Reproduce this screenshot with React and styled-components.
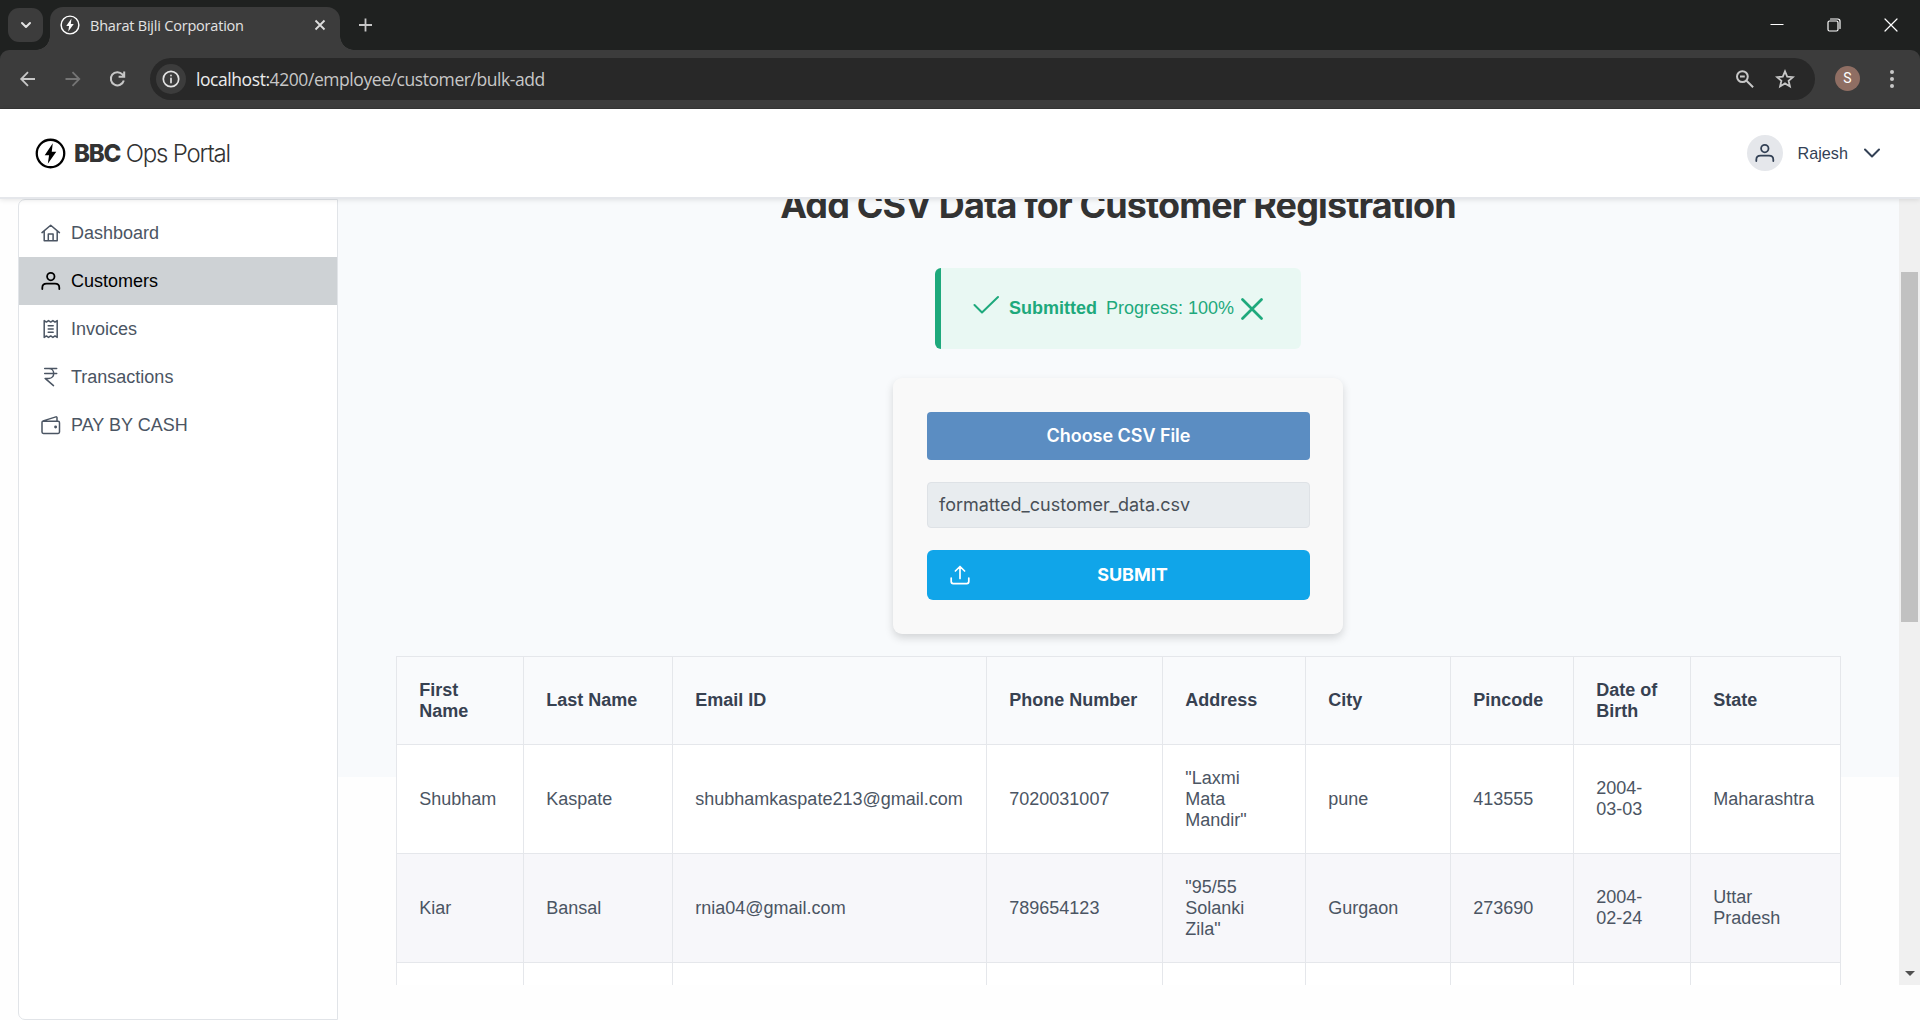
import React from "react";
import styled, { createGlobalStyle } from "styled-components";

const sans = `"Liberation Sans", Arial, sans-serif`;
const inter = `Inter, "Liberation Sans", sans-serif`;
const chromeFont = `"Open Sans", "Noto Sans", sans-serif`;

const GlobalStyle = createGlobalStyle`
  *, *::before, *::after { box-sizing: border-box; }
  html, body { margin: 0; height: 100%; overflow: hidden; background: #fefefe; }
  svg { display: block; flex: none; }
`;

const Window = styled.div`
  display: flex;
  flex-direction: column;
  width: 1920px;
  height: 1020px;
  overflow: hidden;
  font-family: ${sans};
  background: #fefefe;
`;

/* ---------- browser chrome ---------- */
const TabStrip = styled.div`
  display: flex;
  align-items: flex-end;
  height: 50px;
  flex: none;
  padding-left: 8px;
  background: #1f2120;
`;
const TabSearch = styled.div`
  display: flex;
  align-items: center;
  justify-content: center;
  width: 35px;
  height: 34px;
  margin: 0 7px 8px 0;
  border-radius: 11px;
  background: #3c3c3c;
`;
const Tab = styled.div`
  position: relative;
  display: flex;
  align-items: center;
  width: 290px;
  height: 43px;
  padding: 0 14px 7px 10px;
  border-radius: 13px 13px 0 0;
  background: #3c3c3c;
  &::before, &::after {
    content: "";
    position: absolute;
    bottom: 0;
    width: 14px;
    height: 14px;
  }
  &::before { left: -14px; background: radial-gradient(circle at 0 0, transparent 13.5px, #3c3c3c 14px); }
  &::after { right: -14px; background: radial-gradient(circle at 100% 0, transparent 13.5px, #3c3c3c 14px); }
`;
const TabTitle = styled.span`
  flex: 1;
  margin-left: 10px;
  padding-top: 1px;
  font: 400 14.5px/20px ${chromeFont};
  letter-spacing: -0.21px;
  color: #e3e3e3;
  white-space: nowrap;
`;
const NewTab = styled.div`
  display: flex;
  margin: 0 0 17px 17px;
`;
const WindowButtons = styled.div`
  display: flex;
  align-items: center;
  gap: 43px;
  margin: 0 22px 18px auto;
`;
const Toolbar = styled.div`
  display: flex;
  align-items: center;
  flex: none;
  height: 59px;
  padding: 0 19px 1px 18px;
  border-bottom: 1px solid #353535;
  border-radius: 9px 9px 0 0;
  background: #3c3c3c;
`;
const ToolbarWrap = styled.div`
  flex: none;
  background: #1f2120;
`;
const NavButtons = styled.div`
  display: flex;
  align-items: center;
  gap: 25px;
  width: 132px;
`;
const Omnibox = styled.div`
  display: flex;
  align-items: center;
  width: 1665px;
  height: 42px;
  padding: 0 20px 0 6px;
  border-radius: 21px;
  background: #282828;
`;
const SiteInfo = styled.div`
  display: flex;
  align-items: center;
  justify-content: center;
  width: 30px;
  height: 30px;
  border-radius: 50%;
  background: #3c3c3c;
`;
const Url = styled.span`
  flex: 1;
  margin-left: 10px;
  font: 400 17.5px/24px ${chromeFont};
  letter-spacing: -0.43px;
  color: #c7c7c7;
  b { font-weight: 400; color: #ececec; }
`;
const OmniIcons = styled.div`
  display: flex;
  align-items: center;
  gap: 21px;
`;
const Profile = styled.div`
  display: flex;
  align-items: center;
  justify-content: center;
  width: 25px;
  height: 25px;
  margin: 0 29px 0 20px;
  border-radius: 50%;
  background: #8f6e63;
  color: #fff;
  font: 400 14px/25px Roboto, sans-serif;
`;

/* ---------- page ---------- */
const Header = styled.header`
  position: relative;
  z-index: 2;
  display: flex;
  align-items: center;
  justify-content: space-between;
  flex: none;
  height: 90px;
  padding: 0 40px 0 35px;
  border-bottom: 2px solid #e5e7eb;
  background: #fff;
  box-shadow: 0 1px 5px rgba(0, 0, 0, 0.1);
`;
const Brand = styled.div`
  display: flex;
  align-items: center;
`;
const BrandName = styled.span`
  margin-left: 8px;
  padding-top: 2px;
  font: 300 24px/32px ${inter};
  letter-spacing: -1.2px;
  color: #333;
  b { font-weight: 800; letter-spacing: -1.15px; }
`;
const User = styled.div`
  display: flex;
  align-items: center;
  font-size: 16.2px;
  color: #334155;
`;
const Avatar = styled.div`
  display: flex;
  align-items: center;
  justify-content: center;
  width: 36px;
  height: 36px;
  margin-right: 14.5px;
  border-radius: 50%;
  background: #e5e7eb;
`;
const UserName = styled.span`
  width: 66.5px;
`;
const Body = styled.div`
  display: flex;
  height: 821px;
  padding-left: 18px;
`;
const Sidebar = styled.nav`
  flex: none;
  width: 320px;
  height: 821px;
  padding-top: 9px;
  border: 1px solid #e1e4e8;
  border-radius: 7px 0 0 7px;
  background: #fff;
`;
const NavItem = styled.div`
  display: flex;
  align-items: center;
  gap: 10px;
  height: 48px;
  padding-left: 22px;
  font-size: 18px;
  color: ${(p) => (p.$active ? "#000" : "#4b5563")};
  background: ${(p) => (p.$active ? "#ced2d5" : "transparent")};
`;
const Scroller = styled.main`
  display: flex;
  flex: none;
  width: 1582px;
  height: 786px;
  overflow: hidden;
`;
const Content = styled.div`
  display: flex;
  flex-direction: column;
  align-items: center;
  flex: none;
  width: 1561px;
  padding-right: 1px;
  background: linear-gradient(#f8fafc 578px, #fefefe 578px);
`;
const Title = styled.h1`
  flex: none;
  margin: -15px 0 0;
  height: 84px;
  font: 700 36px/43px ${inter};
  letter-spacing: -0.87px;
  color: #333;
  white-space: nowrap;
`;
const Alert = styled.div`
  display: flex;
  align-items: center;
  flex: none;
  width: 366px;
  height: 81px;
  padding: 0 38.5px 0 32px;
  border-left: 6px solid #1ea97c;
  border-radius: 6px;
  background: #e9f8f3;
  color: #1ea97c;
  font-size: 18px;
  b { margin: 0 9px 0 10px; }
  span { flex: 1; white-space: nowrap; }
`;
const CheckMark = styled.svg`
  margin-bottom: 7px;
`;
const Card = styled.section`
  display: flex;
  flex-direction: column;
  flex: none;
  gap: 22px;
  width: 450px;
  height: 256px;
  margin: 29px 0 22px;
  padding: 34px 33px 34px 34px;
  border-radius: 9px;
  background: #f9f9f9;
  box-shadow: 0 4px 9px rgba(0, 0, 0, 0.15);
`;
const ChooseButton = styled.div`
  height: 48px;
  border-radius: 4px;
  background: #5b8dc2;
  color: #fff;
  font: 600 18px/47px ${inter};
  letter-spacing: -0.05px;
  text-align: center;
`;
const FileName = styled.div`
  height: 46px;
  padding-left: 11px;
  border: 1px solid #dee2e6;
  border-radius: 4px;
  background: #e8ecef;
  color: #495057;
  font: 400 18px/43px ${inter};
`;
const SubmitButton = styled.div`
  display: flex;
  align-items: center;
  height: 50px;
  padding: 0 23px;
  border-radius: 6px;
  background: #10a5e9;
  color: #fff;
  font: 700 18px/48px ${inter};
  span { flex: 1; padding-left: 8px; text-align: center; }
`;
const Table = styled.table`
  flex: none;
  width: 1445px;
  table-layout: fixed;
  border-collapse: collapse;
  font-size: 18px;
  line-height: 21px;
  color: #4b5563;
  text-align: left;
  th, td {
    padding: 0 21px 0 22.8px;
    border: 1px solid #e5e7eb;
    vertical-align: middle;
  }
  th { height: 88px; color: #374151; background: #f9fafc; }
  td { height: 109px; background: #fff; }
  tbody tr:nth-child(even) td { background: #f7f7fa; }
`;
const Scrollbar = styled.div`
  display: flex;
  flex-direction: column;
  justify-content: space-between;
  flex: none;
  width: 21px;
  height: 786px;
  padding: 73px 2px 9px;
  background: #f0f0f0;
`;
const Thumb = styled.div`
  width: 17px;
  height: 350px;
  background: #c1c1c1;
`;
const ScrollArrow = styled.svg`
  align-self: center;
`;

/* ---------- icons ---------- */
function Icon({ size = 20, box = 20, w = 1.5, children, ...rest }) {
  return (
    <svg width={size} height={size} viewBox={`0 0 ${box} ${box}`} fill="none" stroke="currentColor"
      strokeWidth={w} strokeLinecap="round" strokeLinejoin="round" {...rest}>
      {children}
    </svg>
  );
}
const Bolt = ({ size, color }) => (
  <svg width={size} height={size} viewBox="0 0 30 30">
    <circle cx="15" cy="15" r="13.3" fill="none" stroke={color} strokeWidth="2.2" />
    <path d="M17.2 5.2 9.4 16.6h4.2L12.4 24.8 20.6 13.4h-4.4z" fill={color} />
  </svg>
);
const HomeIcon = () => (
  <Icon><path d="M1 9.6 9.7 2.3l8.7 7.3M3.2 8.2v9.5h13V8.2M7.3 17.5v-6.6h4.8v6.6" /></Icon>
);
const PersonIcon = ({ size = 20, w = 1.8 }) => (
  <Icon size={size} w={w}><circle cx="9.8" cy="5.6" r="3.7" /><path d="M1.3 18v-1.2c0-2.4 1.8-4.1 4.3-4.1H14c2.5 0 4.3 1.7 4.3 4.1V18" /></Icon>
);
const ReceiptIcon = () => (
  <Icon w={1.5}>
    <path d="M3.2 1.6v16.8l2.2-1.5 2.1 1.5 2.2-1.5 2.2 1.5 2.1-1.5 2.2 1.5V1.6L14 3.1l-2.1-1.5-2.2 1.5-2.2-1.5-2.1 1.5z" />
    <path d="M7.2 6.8h5M7.2 10h5M7.2 13.2h5" />
  </Icon>
);
const RupeeIcon = () => (
  <Icon><path d="M3.7 1.6h12M3.7 6.5h12M3.7 1.6h4.2c6.4 0 6.4 9.8 0 9.8H4.1l8.4 7.2" /></Icon>
);
const WalletIcon = () => (
  <Icon>
    <path d="M2.4 6.3h14.7c.8 0 1.4.6 1.4 1.4v9.4c0 .8-.6 1.4-1.4 1.4H2.4c-.8 0-1.4-.6-1.4-1.4V7.4c0-.7.4-1.3 1.1-1.5l12.8-4c.6-.2 1.1.2 1.1.8v3.4" />
    <circle cx="14.6" cy="12" r="0.7" fill="currentColor" />
  </Icon>
);

const NAV = [
  ["Dashboard", HomeIcon],
  ["Customers", PersonIcon],
  ["Invoices", ReceiptIcon],
  ["Transactions", RupeeIcon],
  ["PAY BY CASH", WalletIcon],
];
const COLUMNS = [
  ["First Name", 127], ["Last Name", 149], ["Email ID", 314], ["Phone Number", 176], ["Address", 143],
  ["City", 145], ["Pincode", 123], ["Date of Birth", 117], ["State", 150],
];
const ROWS = [
  ["Shubham", "Kaspate", "shubhamkaspate213@gmail.com", "7020031007", ['"Laxmi', "Mata", 'Mandir"'], "pune", "413555", ["2004-", "03-03"], "Maharashtra"],
  ["Kiar", "Bansal", "rnia04@gmail.com", "789654123", ['"95/55', "Solanki", 'Zila"'], "Gurgaon", "273690", ["2004-", "02-24"], ["Uttar", "Pradesh"]],
  ["", "", "", "", "", "", "", "", ""],
];
const Lines = ({ value }) =>
  Array.isArray(value)
    ? value.map((line, i) => <React.Fragment key={i}>{i > 0 && <br />}{line}</React.Fragment>)
    : value;

function BrowserChrome() {
  return (
    <>
      <TabStrip>
        <TabSearch><Icon size={12} box={12} w={2} color="#e3e3e3"><path d="M2 4l4 4 4-4" /></Icon></TabSearch>
        <Tab>
          <Bolt size={20} color="#fff" />
          <TabTitle>Bharat Bijli Corporation</TabTitle>
          <Icon size={12} box={12} w={1.8} color="#dedede" strokeLinecap="butt"><path d="M1.5 1.5l9 9M10.5 1.5l-9 9" /></Icon>
        </Tab>
        <NewTab><Icon size={16} box={16} w={1.8} color="#c7c7c7" strokeLinecap="butt"><path d="M8.5 1.5v13M2 8h13" /></Icon></NewTab>
        <WindowButtons>
          <Icon size={14} box={14} w={1} color="#fff" strokeLinecap="butt"><path d="M.5 6.5h13" /></Icon>
          <Icon size={14} box={14} w={1.2} color="#fff"><rect x="1" y="3" width="10" height="10" rx="1.5" /><path d="M3.5 1h7.3c1.3 0 2.2.9 2.2 2.2v7.3" /></Icon>
          <Icon size={14} box={14} w={1.2} color="#fff"><path d="M1 1l12 12M13 1L1 13" /></Icon>
        </WindowButtons>
      </TabStrip>
      <ToolbarWrap>
        <Toolbar>
          <NavButtons>
            <Icon size={20} w={1.8} color="#c7c7c7" strokeLinecap="butt" strokeLinejoin="miter"><path d="M17 10H3.5M10 3.2 3.2 10l6.8 6.8" /></Icon>
            <Icon size={20} w={1.8} color="#757575" strokeLinecap="butt" strokeLinejoin="miter"><path d="M2.5 10H16M9.5 3.2l6.8 6.8-6.8 6.8" /></Icon>
            <Icon size={20} w={2} color="#c7c7c7" strokeLinecap="butt" strokeLinejoin="miter"><path d="M15.8 11.5A6.6 6.6 0 1 1 14.4 5.4L16.1 7.5M16.2 2.5v5.3h-5.6" /></Icon>
          </NavButtons>
          <Omnibox>
            <SiteInfo><Icon size={18} box={18} w={1.7} color="#e3e3e3"><circle cx="9" cy="9" r="7.7" /><path d="M9 8.4v4.2M9 5.4v.2" /></Icon></SiteInfo>
            <Url><b>localhost:</b>4200/employee/customer/bulk-add</Url>
            <OmniIcons>
              <Icon size={20} w={2} color="#c7c7c7" strokeLinecap="butt"><circle cx="8.4" cy="7.6" r="5.4" /><path d="M12.5 11.7l6.6 6.6M6 7.6h4.8" /></Icon>
              <Icon size={20} w={1.8} color="#c7c7c7" strokeLinejoin="miter"><path d="M10 2.4l2.2 5.2 5.7.5-4.3 3.7 1.3 5.6-4.9-3-4.9 3 1.3-5.6-4.3-3.7 5.7-.5z" /></Icon>
            </OmniIcons>
          </Omnibox>
          <Profile>S</Profile>
          <svg width="6" height="20" viewBox="0 0 6 20" fill="#c7c7c7"><circle cx="3" cy="3" r="2" /><circle cx="3" cy="10" r="2" /><circle cx="3" cy="17" r="2" /></svg>
        </Toolbar>
      </ToolbarWrap>
    </>
  );
}

export default function App() {
  return (
    <Window>
      <GlobalStyle />
      <BrowserChrome />
      <Header>
        <Brand>
          <Bolt size={31} color="#000" />
          <BrandName><b>BBC</b> Ops Portal</BrandName>
        </Brand>
        <User>
          <Avatar><PersonIcon size={20} w={1.8} /></Avatar>
          <UserName>Rajesh</UserName>
          <Icon size={16} box={16} w={2}><path d="M1 4.5l7 7 7-7" /></Icon>
        </User>
      </Header>
      <Body>
        <Sidebar>
          {NAV.map(([label, Glyph]) => (
            <NavItem key={label} $active={label === "Customers"}><Glyph />{label}</NavItem>
          ))}
        </Sidebar>
        <Scroller>
          <Content>
            <Title>Add CSV Data for Customer Registration</Title>
            <Alert>
              <CheckMark width="26" height="26" viewBox="0 0 26 26" fill="none" stroke="currentColor"
                strokeWidth="2" strokeLinecap="round" strokeLinejoin="round"><path d="M1.5 13l7.5 7.5L25 5" /></CheckMark>
              <b>Submitted</b>
              <span>Progress: 100%</span>
              <Icon size={22} box={22} w={2.7}><path d="M1.5 1.5l19 19M20.5 1.5l-19 19" /></Icon>
            </Alert>
            <Card>
              <ChooseButton>Choose CSV File</ChooseButton>
              <FileName>formatted_customer_data.csv</FileName>
              <SubmitButton>
                <Icon w={1.7}><path d="M10 13.5V1.8M5.4 6 10 1.5 14.6 6M1.2 13v3.6c0 1.2.8 2 2 2h13.6c1.2 0 2-.8 2-2V13" /></Icon>
                <span>SUBMIT</span>
              </SubmitButton>
            </Card>
            <Table>
              <colgroup>{COLUMNS.map(([name, width]) => <col key={name} style={{ width }} />)}</colgroup>
              <thead><tr>{COLUMNS.map(([name]) => <th key={name}>{name}</th>)}</tr></thead>
              <tbody>
                {ROWS.map((row, r) => (
                  <tr key={r}>{row.map((cell, c) => <td key={c}><Lines value={cell} /></td>)}</tr>
                ))}
              </tbody>
            </Table>
          </Content>
          <Scrollbar>
            <Thumb />
            <ScrollArrow width="10" height="5" viewBox="0 0 10 5"><path d="M0 0h10L5 5z" fill="#505050" /></ScrollArrow>
          </Scrollbar>
        </Scroller>
      </Body>
    </Window>
  );
}
